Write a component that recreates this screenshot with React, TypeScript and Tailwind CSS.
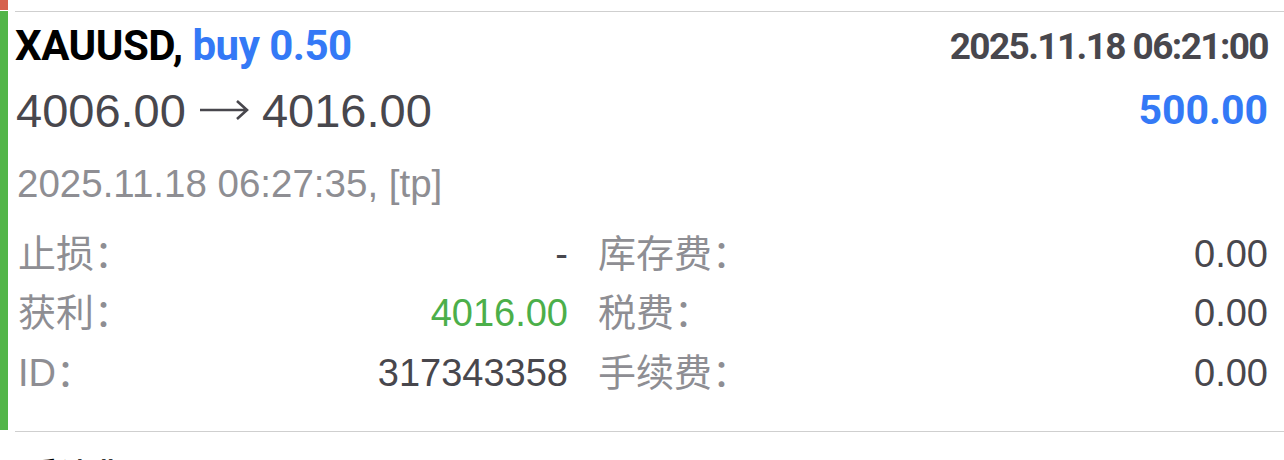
import React from 'react';

const sans = "font-['Liberation_Sans','Noto_Sans_CJK_SC',sans-serif]";
const bold = "font-['Roboto','Liberation_Sans',sans-serif] font-bold";

interface Field {
  label: string;
  value: string;
  tone?: string;
}

const leftFields: Field[] = [
  { label: '止损：', value: '-' },
  { label: '获利：', value: '4016.00', tone: 'text-[#4caf4a]' },
  { label: 'ID：', value: '317343358' },
];

const rightFields: Field[] = [
  { label: '库存费：', value: '0.00' },
  { label: '税费：', value: '0.00' },
  { label: '手续费：', value: '0.00' },
];

function FieldRow({ field }: { field: Field }) {
  return (
    <div className="h-[59.5px] flex items-center justify-between">
      <span className="text-[#8e8e93]">{field.label}</span>
      <span className={field.tone ?? 'text-[#48474d]'}>{field.value}</span>
    </div>
  );
}

export default function App() {
  return (
    <div className={`w-[1284px] h-[460px] overflow-hidden bg-white flex ${sans}`}>
      {/* side marker */}
      <div className="w-[8px] flex flex-col shrink-0">
        <div className="h-[10px] bg-[#d6624d]" />
        <div className="h-[1px]" />
        <div className="h-[419px] bg-[#52b548]" />
      </div>

      <div className="flex-1 pl-[7px]">
        <div className="border-t border-[#cfcfcf] mt-[11px]" />

        <div className="pr-[16px]">
          <div className="h-[68px] flex items-center justify-between">
            <div className={`${bold} text-[42px] leading-none tracking-[-0.5px]`}>
              <span className="text-black">XAUUSD,</span>{' '}
              <span className="text-[#3479f6]">buy 0.50</span>
            </div>
            <div className={`${bold} text-[37px] leading-none tracking-[-1.6px] text-[#48474d]`}>
              2025.11.18 06:21:00
            </div>
          </div>

          <div className="h-[60px] flex items-center justify-between pl-[1px]">
            <div className="flex items-center text-[47px] leading-none text-[#48474d]">
              <span>4006.00</span>
              <svg className="mx-[13px]" width="50" height="24" viewBox="0 0 50 24" fill="none">
                <path d="M1 12H48M38 3L48 12L38 21" stroke="#48474d" strokeWidth="2.6" />
              </svg>
              <span>4016.00</span>
            </div>
            <div className={`${bold} text-[41px] leading-none text-[#3479f6]`}>500.00</div>
          </div>

          <div className="mt-[14px] h-[60px] flex items-center pl-[2px] text-[38.5px] leading-none text-[#8e8e93]">
            2025.11.18 06:27:35, [tp]
          </div>

          <div className="mt-[10px] grid grid-cols-[550px_1fr] gap-x-[30px] pl-[3px] text-[38px] leading-none">
            <div>
              {leftFields.map(f => (
                <FieldRow key={f.label} field={f} />
              ))}
            </div>
            <div>
              {rightFields.map(f => (
                <FieldRow key={f.label} field={f} />
              ))}
            </div>
          </div>
        </div>

        <div className="border-t border-[#cfcfcf] mt-[28px]" />
        <div className={`pl-[12px] pt-[27px] text-[32px] leading-none text-black ${bold}`}>
          手续费
        </div>
      </div>
    </div>
  );
}
